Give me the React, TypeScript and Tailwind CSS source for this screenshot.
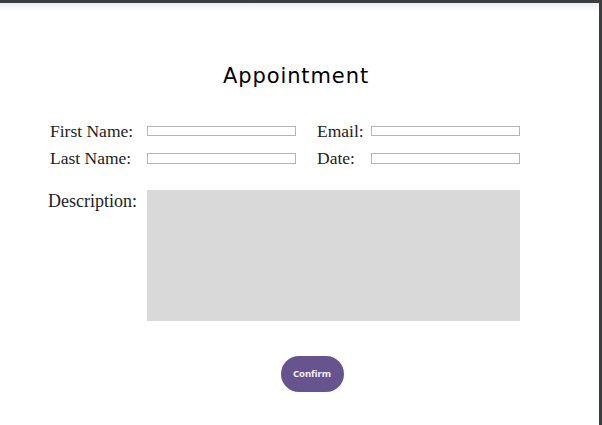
export default function App() {
  return (
    <div className="w-[602px] h-[425px] bg-white relative overflow-hidden">
      {/* window frame */}
      <div className="absolute top-0 left-0 right-0 h-[3px] bg-[#3b3e41]" />
      <div className="absolute top-[3px] left-0 right-[3px] h-[8px] bg-gradient-to-b from-[#ececec] to-white" />
      <div className="absolute top-0 bottom-0 right-0 w-[3px] bg-[#3b3e41]" />

      <div className="pt-[64px] pl-[50px] pr-[82px] flex flex-col">
        <h1
          className="text-center text-[21px] leading-[24px] tracking-[0.9px] text-black ml-[22px]"
          style={{ fontFamily: '"DejaVu Sans", sans-serif' }}
        >
          Appointment
        </h1>

        <div
          className="mt-[35px] flex flex-col gap-[11px] text-[17.5px] text-[#222]"
          style={{ fontFamily: '"Liberation Serif", serif' }}
        >
          <div className="flex items-center h-[16px]">
            <label className="w-[97px]">First Name:</label>
            <input className="w-[149px] h-[10px] border border-[#b5b5b5] bg-white" />
            <label className="w-[54px] ml-[21px]">Email:</label>
            <input className="w-[149px] h-[10px] border border-[#b5b5b5] bg-white" />
          </div>
          <div className="flex items-center h-[16px]">
            <label className="w-[97px]">Last Name:</label>
            <input className="w-[149px] h-[11px] border border-[#b5b5b5] bg-white" />
            <label className="w-[54px] ml-[21px]">Date:</label>
            <input className="w-[149px] h-[11px] border border-[#b5b5b5] bg-white" />
          </div>
          <div className="flex items-start mt-[13px]">
            <label className="w-[97px] -ml-[2px] text-[18px] leading-[20px] pt-[1px]">Description:</label>
            <textarea className="w-[373px] h-[131px] bg-[#d9d9d9] resize-none ml-[2px]" />
          </div>
        </div>

        <div className="flex justify-center mt-[35px] ml-[54px]">
          <button
            className="w-[63px] h-[36px] rounded-full bg-[#67548f] text-[#f4f0fa] text-[9.5px] font-bold"
            style={{ fontFamily: '"Noto Sans", sans-serif' }}
          >
            Confirm
          </button>
        </div>
      </div>
    </div>
  );
}
